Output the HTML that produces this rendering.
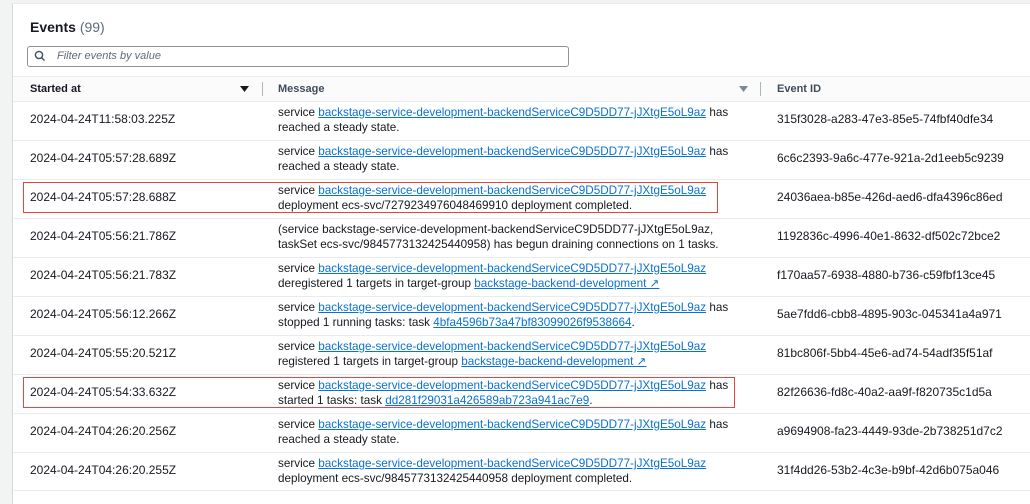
<!DOCTYPE html>
<html><head><meta charset="utf-8"><style>
body{margin:0;width:1030px;height:495px;overflow:hidden;background:#f2f3f3;font-family:"Liberation Sans",sans-serif;color:#16191f;position:relative}
.panel{position:absolute;left:12px;top:3px;width:1030px;height:500px;background:#fff;border-left:1px solid #d5dbdb;border-top:1px solid #eaeded}
.t{position:absolute;font-size:11.7px;white-space:nowrap;line-height:15px}
.d{font-size:12px}
.id{font-size:12px}
a{color:#0972d3;text-decoration:underline}
.row{position:absolute;left:13px;width:1017px;border-top:1px solid #e9ebed}
.red{position:absolute;border:1.5px solid #e8453c}
</style></head><body>
<div class="panel"></div>
<div class="t" style="left:30px;top:20px;font-size:14px;font-weight:bold">Events <span style="font-weight:normal;color:#5f6b7a">(99)</span></div>
<div style="position:absolute;left:27px;top:46px;width:540px;height:19px;border:1px solid #8d9399;border-radius:3px;background:#fff"></div>
<svg style="position:absolute;left:34px;top:50px" width="12" height="12" viewBox="0 0 12 12"><circle cx="5" cy="5" r="3.6" fill="none" stroke="#414d5c" stroke-width="1.4"/><path d="M7.6 7.6L10.5 10.5" stroke="#414d5c" stroke-width="1.4"/></svg>
<div class="t" style="left:57px;top:49px;font-style:italic;color:#5f6b7a;font-size:11px">Filter events by value</div>
<div style="position:absolute;left:13px;top:76px;width:1017px;height:25px;background:#fbfbfb;border-top:1px solid #e9ebed"></div>
<div class="t" style="left:30px;top:82px;font-weight:bold;font-size:11px">Started at</div>
<svg style="position:absolute;left:240px;top:86px" width="9" height="6"><path d="M0 0H9L4.5 6Z" fill="#16191f"/></svg>
<div style="position:absolute;left:262px;top:82px;width:1px;height:14px;background:#aab7b8"></div>
<div class="t" style="left:278px;top:82px;font-weight:bold;font-size:11px;color:#414d5c">Message</div>
<svg style="position:absolute;left:739px;top:86px" width="9" height="6"><path d="M0 0H9L4.5 6Z" fill="#7d8998"/></svg>
<div style="position:absolute;left:760px;top:82px;width:1px;height:14px;background:#aab7b8"></div>
<div class="t" style="left:777px;top:82px;font-weight:bold;font-size:11px;color:#414d5c">Event ID</div>

<div class="row" style="top:101px"></div>
<div class="t d" style="left:30px;top:112px">2024-04-24T11:58:03.225Z</div>
<div class="t" style="left:278px;top:105px">service <a>backstage-service-development-backendServiceC9D5DD77-jJXtgE5oL9az</a> has<br>reached a steady state.</div>
<div class="t id" style="left:777px;top:112px">315f3028-a283-47e3-85e5-74fbf40dfe34</div>

<div class="row" style="top:140px"></div>
<div class="t d" style="left:30px;top:151px">2024-04-24T05:57:28.689Z</div>
<div class="t" style="left:278px;top:144px">service <a>backstage-service-development-backendServiceC9D5DD77-jJXtgE5oL9az</a> has<br>reached a steady state.</div>
<div class="t id" style="left:777px;top:151px">6c6c2393-9a6c-477e-921a-2d1eeb5c9239</div>

<div class="row" style="top:179px"></div>
<div class="t d" style="left:30px;top:190px">2024-04-24T05:57:28.688Z</div>
<div class="t" style="left:278px;top:183px">service <a>backstage-service-development-backendServiceC9D5DD77-jJXtgE5oL9az</a><br>deployment ecs-svc/7279234976048469910 deployment completed.</div>
<div class="t id" style="left:777px;top:190px">24036aea-b85e-426d-aed6-dfa4396c86ed</div>

<div class="row" style="top:218px"></div>
<div class="t d" style="left:30px;top:229px">2024-04-24T05:56:21.786Z</div>
<div class="t" style="left:278px;top:222px">(service backstage-service-development-backendServiceC9D5DD77-jJXtgE5oL9az,<br>taskSet ecs-svc/9845773132425440958) has begun draining connections on 1 tasks.</div>
<div class="t id" style="left:777px;top:229px">1192836c-4996-40e1-8632-df502c72bce2</div>

<div class="row" style="top:257px"></div>
<div class="t d" style="left:30px;top:268px">2024-04-24T05:56:21.783Z</div>
<div class="t" style="left:278px;top:261px">service <a>backstage-service-development-backendServiceC9D5DD77-jJXtgE5oL9az</a><br>deregistered 1 targets in target-group <a>backstage-backend-development ↗</a></div>
<div class="t id" style="left:777px;top:268px">f170aa57-6938-4880-b736-c59fbf13ce45</div>

<div class="row" style="top:296px"></div>
<div class="t d" style="left:30px;top:307px">2024-04-24T05:56:12.266Z</div>
<div class="t" style="left:278px;top:300px">service <a>backstage-service-development-backendServiceC9D5DD77-jJXtgE5oL9az</a> has<br>stopped 1 running tasks: task <a>4bfa4596b73a47bf83099026f9538664</a>.</div>
<div class="t id" style="left:777px;top:307px">5ae7fdd6-cbb8-4895-903c-045341a4a971</div>

<div class="row" style="top:335px"></div>
<div class="t d" style="left:30px;top:346px">2024-04-24T05:55:20.521Z</div>
<div class="t" style="left:278px;top:339px">service <a>backstage-service-development-backendServiceC9D5DD77-jJXtgE5oL9az</a><br>registered 1 targets in target-group <a>backstage-backend-development ↗</a></div>
<div class="t id" style="left:777px;top:346px">81bc806f-5bb4-45e6-ad74-54adf35f51af</div>

<div class="row" style="top:374px"></div>
<div class="t d" style="left:30px;top:385px">2024-04-24T05:54:33.632Z</div>
<div class="t" style="left:278px;top:378px">service <a>backstage-service-development-backendServiceC9D5DD77-jJXtgE5oL9az</a> has<br>started 1 tasks: task <a>dd281f29031a426589ab723a941ac7e9</a>.</div>
<div class="t id" style="left:777px;top:385px">82f26636-fd8c-40a2-aa9f-f820735c1d5a</div>

<div class="row" style="top:413px"></div>
<div class="t d" style="left:30px;top:424px">2024-04-24T04:26:20.256Z</div>
<div class="t" style="left:278px;top:417px">service <a>backstage-service-development-backendServiceC9D5DD77-jJXtgE5oL9az</a> has<br>reached a steady state.</div>
<div class="t id" style="left:777px;top:424px">a9694908-fa23-4449-93de-2b738251d7c2</div>

<div class="row" style="top:452px"></div>
<div class="t d" style="left:30px;top:463px">2024-04-24T04:26:20.255Z</div>
<div class="t" style="left:278px;top:456px">service <a>backstage-service-development-backendServiceC9D5DD77-jJXtgE5oL9az</a><br>deployment ecs-svc/9845773132425440958 deployment completed.</div>
<div class="t id" style="left:777px;top:463px">31f4dd26-53b2-4c3e-b9bf-42d6b075a046</div>
<div class="row" style="top:490px"></div>

<div class="red" style="left:23px;top:182px;width:693px;height:29px"></div>
<div class="red" style="left:23px;top:377px;width:710px;height:29px"></div>
</body></html>
